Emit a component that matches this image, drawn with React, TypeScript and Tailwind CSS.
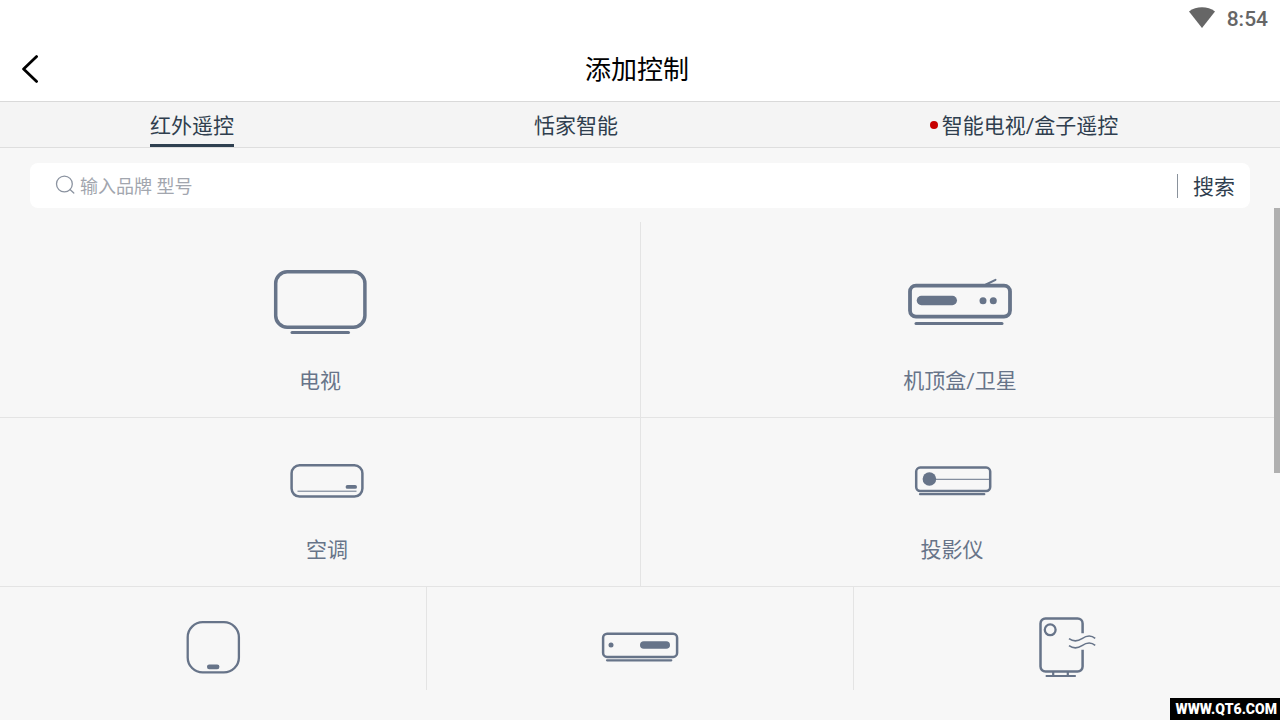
import type { ReactNode } from "react";

const tabs = [
    { name: "红外遥控", active: true, dot: false },
    { name: "恬家智能", active: false, dot: false },
    { name: "智能电视/盒子遥控", active: false, dot: true },
];

function TvIcon() {
    return (
        <svg className="h-20 w-[120px]" viewBox="0 0 120 80" fill="none" stroke="currentColor" aria-hidden="true">
            <rect x="15.7" y="9.8" width="89.2" height="55.4" rx="11.5" strokeWidth="3.5" />
            <path d="M32 70.6H88.5" strokeWidth="3" strokeLinecap="round" />
        </svg>
    );
}

function SetTopBoxIcon() {
    return (
        <svg className="h-20 w-[120px]" viewBox="0 0 120 80" fill="none" stroke="currentColor" aria-hidden="true">
            <rect x="10" y="23.6" width="100" height="31" rx="6" strokeWidth="3.8" />
            <path d="M86 22.5L95.5 17.8" strokeWidth="2" strokeLinecap="round" />
            <path d="M16 61.4H102" strokeWidth="3" strokeLinecap="round" />
            <g fill="currentColor" stroke="none">
                <rect x="16.7" y="33.8" width="40.3" height="9.4" rx="4.7" />
                <circle cx="83" cy="38.7" r="3.5" />
                <circle cx="93.3" cy="38.7" r="3.5" />
            </g>
        </svg>
    );
}

function AirConditionerIcon() {
    return (
        <svg className="h-[60px] w-[120px]" viewBox="0 0 120 60" fill="none" stroke="currentColor" aria-hidden="true">
            <rect x="24.6" y="14.2" width="70.8" height="31.4" rx="8" strokeWidth="2.5" />
            <path d="M30.5 40.2H89.5" strokeWidth="1" />
            <rect x="78.6" y="34" width="11.4" height="3.8" rx="1.9" fill="currentColor" stroke="none" />
        </svg>
    );
}

function ProjectorIcon() {
    return (
        <svg className="h-[60px] w-[120px]" viewBox="0 0 120 60" fill="none" stroke="currentColor" aria-hidden="true">
            <rect x="24.2" y="16.6" width="74" height="23.4" rx="4" strokeWidth="2.5" />
            <path d="M37 28.3H98" strokeWidth="1" />
            <circle cx="37.4" cy="28" r="6.8" fill="currentColor" stroke="none" />
            <path d="M28 43.2H92.3" strokeWidth="2.2" strokeLinecap="round" />
        </svg>
    );
}

function NetworkBoxIcon() {
    return (
        <svg className="h-[60px] w-[120px]" viewBox="0 0 120 60" fill="none" stroke="currentColor" aria-hidden="true">
            <rect x="34.7" y="5.2" width="51.2" height="50.2" rx="15" strokeWidth="2.3" />
            <rect x="54" y="47.4" width="12.4" height="4.8" rx="2.2" fill="currentColor" stroke="none" />
        </svg>
    );
}

function DvdIcon() {
    return (
        <svg className="h-[60px] w-[120px]" viewBox="0 0 120 60" fill="none" stroke="currentColor" aria-hidden="true">
            <rect x="23.1" y="16.7" width="74" height="23.2" rx="4" strokeWidth="2.5" />
            <path d="M27 43.3H91.3" strokeWidth="2.2" strokeLinecap="round" />
            <circle cx="31" cy="28" r="2.5" fill="currentColor" stroke="none" />
            <rect x="60" y="24.2" width="30" height="7.6" rx="3.8" fill="currentColor" stroke="none" />
        </svg>
    );
}

function PurifierIcon() {
    return (
        <svg className="h-[60px] w-[120px]" viewBox="0 0 120 60" fill="none" stroke="currentColor" aria-hidden="true">
            <path
                d="M75.6 16.2V6.5a5 5 0 0 0-5-5H38.5a5 5 0 0 0-5 5v43a5 5 0 0 0 5 5h32.1a5 5 0 0 0 5-5V32.8"
                strokeWidth="2.5"
            />
            <circle cx="43.2" cy="12.8" r="5.4" strokeWidth="2.3" />
            <path d="M62 21.6C66 24.6 70 25 75 21.6S84 17.8 88.2 21.4" strokeWidth="1.6" />
            <path d="M62 28.6C66 31.6 70 32 75 28.6S84 24.8 88.2 28.4" strokeWidth="1.6" />
            <path d="M38.7 59H68.8M46.2 55V59M60.8 55V59" strokeWidth="2.2" />
        </svg>
    );
}

function DeviceButton({ label, className, children }: { label: string; className: string; children: ReactNode }) {
    return (
        <button type="button" className={`flex flex-col items-center gap-6 pb-[21px] ${className}`}>
            {children}
            <span className="text-[21px] leading-[30px]">{label}</span>
        </button>
    );
}

export default function App() {
    return (
        <div className="relative min-h-screen overflow-hidden bg-[#f7f7f7] font-[Roboto,'Noto_Sans_CJK_SC',sans-serif] text-[#2f3e4e]">
            {/* Status bar */}
            <div className="flex h-[37px] items-center justify-end gap-3 bg-white pr-3 text-[#666]">
                <svg className="mb-0.5 h-[21px] w-[26px]" viewBox="0 0 26 21" fill="currentColor" aria-hidden="true">
                    <path d="M0 4.4C7.4-1.2 18.6-1.2 26 4.4L13 21Z" />
                </svg>
                <time className="text-[21px] leading-6 font-medium">8:54</time>
            </div>

            {/* Title bar */}
            <header className="grid h-[65px] grid-cols-[64px_1fr_70px] items-center border-b border-[#d9d9d9] bg-white text-black">
                <button type="button" aria-label="返回" className="pl-[22px]">
                    <svg className="h-7 w-4" viewBox="0 0 16 28" fill="none" stroke="currentColor" strokeWidth="2.8" strokeLinecap="round" strokeLinejoin="round">
                        <path d="M14.6 1.6L1.6 14L14.6 26.4" />
                    </svg>
                </button>
                <h1 className="pt-0.5 text-center text-[26px] leading-9">添加控制</h1>
            </header>

            <nav className="grid h-[46px] grid-cols-[3fr_3fr_4fr] border-b border-[#dedede] bg-[#f4f4f4]">
                {tabs.map((tab) => (
                    <button key={tab.name} type="button" className="flex items-center justify-center gap-1">
                        {tab.dot && <span className="size-2 rounded-full bg-[#c70000]" />}
                        <span
                            className={`flex h-full items-center border-b-3 pt-1.5 text-[21px] leading-[30px] ${
                                tab.active ? "border-[#2f4050]" : "border-transparent"
                            }`}
                        >
                            {tab.name}
                        </span>
                    </button>
                ))}
            </nav>

            {/* Search */}
            <form className="mx-[30px] mt-[15px] flex h-[45px] items-center rounded-lg bg-white pr-[15px] pl-[25px]">
                <svg className="mb-0.5 size-5 text-[#8b93a0]" viewBox="0 0 20 20" fill="none" stroke="currentColor" strokeWidth="1.3" strokeLinecap="round" aria-hidden="true">
                    <circle cx="9.4" cy="9" r="7.9" />
                    <path d="M15 14.5L18.8 18" />
                </svg>
                <input
                    type="text"
                    aria-label="搜索品牌型号"
                    placeholder="输入品牌 型号"
                    className="ml-[5px] min-w-0 flex-1 pt-0.5 text-lg leading-7 outline-none placeholder:text-[#a2a6ae]"
                />
                <button type="button" className="flex items-center gap-[15px] text-[21px] leading-[30px]">
                    <span className="h-6 w-px bg-[#8a929c]" />
                    <span className="pt-0.5">搜索</span>
                </button>
            </form>

            {/* Device list */}
            <main className="relative pt-[14px] text-[#677489]">
                <div className="grid grid-cols-2 border-b border-[#e4e4e4]">
                    <DeviceButton label="电视" className="pt-10">
                        <TvIcon />
                    </DeviceButton>
                    <DeviceButton label="机顶盒/卫星" className="border-l border-[#e4e4e4] pt-10 pr-px">
                        <SetTopBoxIcon />
                    </DeviceButton>
                </div>
                <div className="grid grid-cols-2 border-b border-[#e4e4e4]">
                    <DeviceButton label="空调" className="pt-[33px] pl-[14px]">
                        <AirConditionerIcon />
                    </DeviceButton>
                    <DeviceButton label="投影仪" className="border-l border-[#e4e4e4] pt-[33px] pr-[17px]">
                        <ProjectorIcon />
                    </DeviceButton>
                </div>
                <div className="grid grid-cols-3">
                    <button type="button" aria-label="网络盒子" className="flex justify-center border-r border-[#e4e4e4] pt-[30px] pb-[13px]">
                        <NetworkBoxIcon />
                    </button>
                    <button type="button" aria-label="DVD" className="flex justify-center pt-[30px] pb-[13px]">
                        <DvdIcon />
                    </button>
                    <button type="button" aria-label="空气净化器" className="flex justify-center border-l border-[#e4e4e4] pt-[30px] pb-[13px]">
                        <PurifierIcon />
                    </button>
                </div>
                <div className="absolute top-0 right-0 h-[265px] w-1.5 bg-[#b0b0b0]" />
            </main>

            <div className="absolute right-0 bottom-0 bg-black pr-[3px] pl-[5px] text-sm leading-[22px] font-black text-white">
                WWW.QT6.COM
            </div>
        </div>
    );
}
